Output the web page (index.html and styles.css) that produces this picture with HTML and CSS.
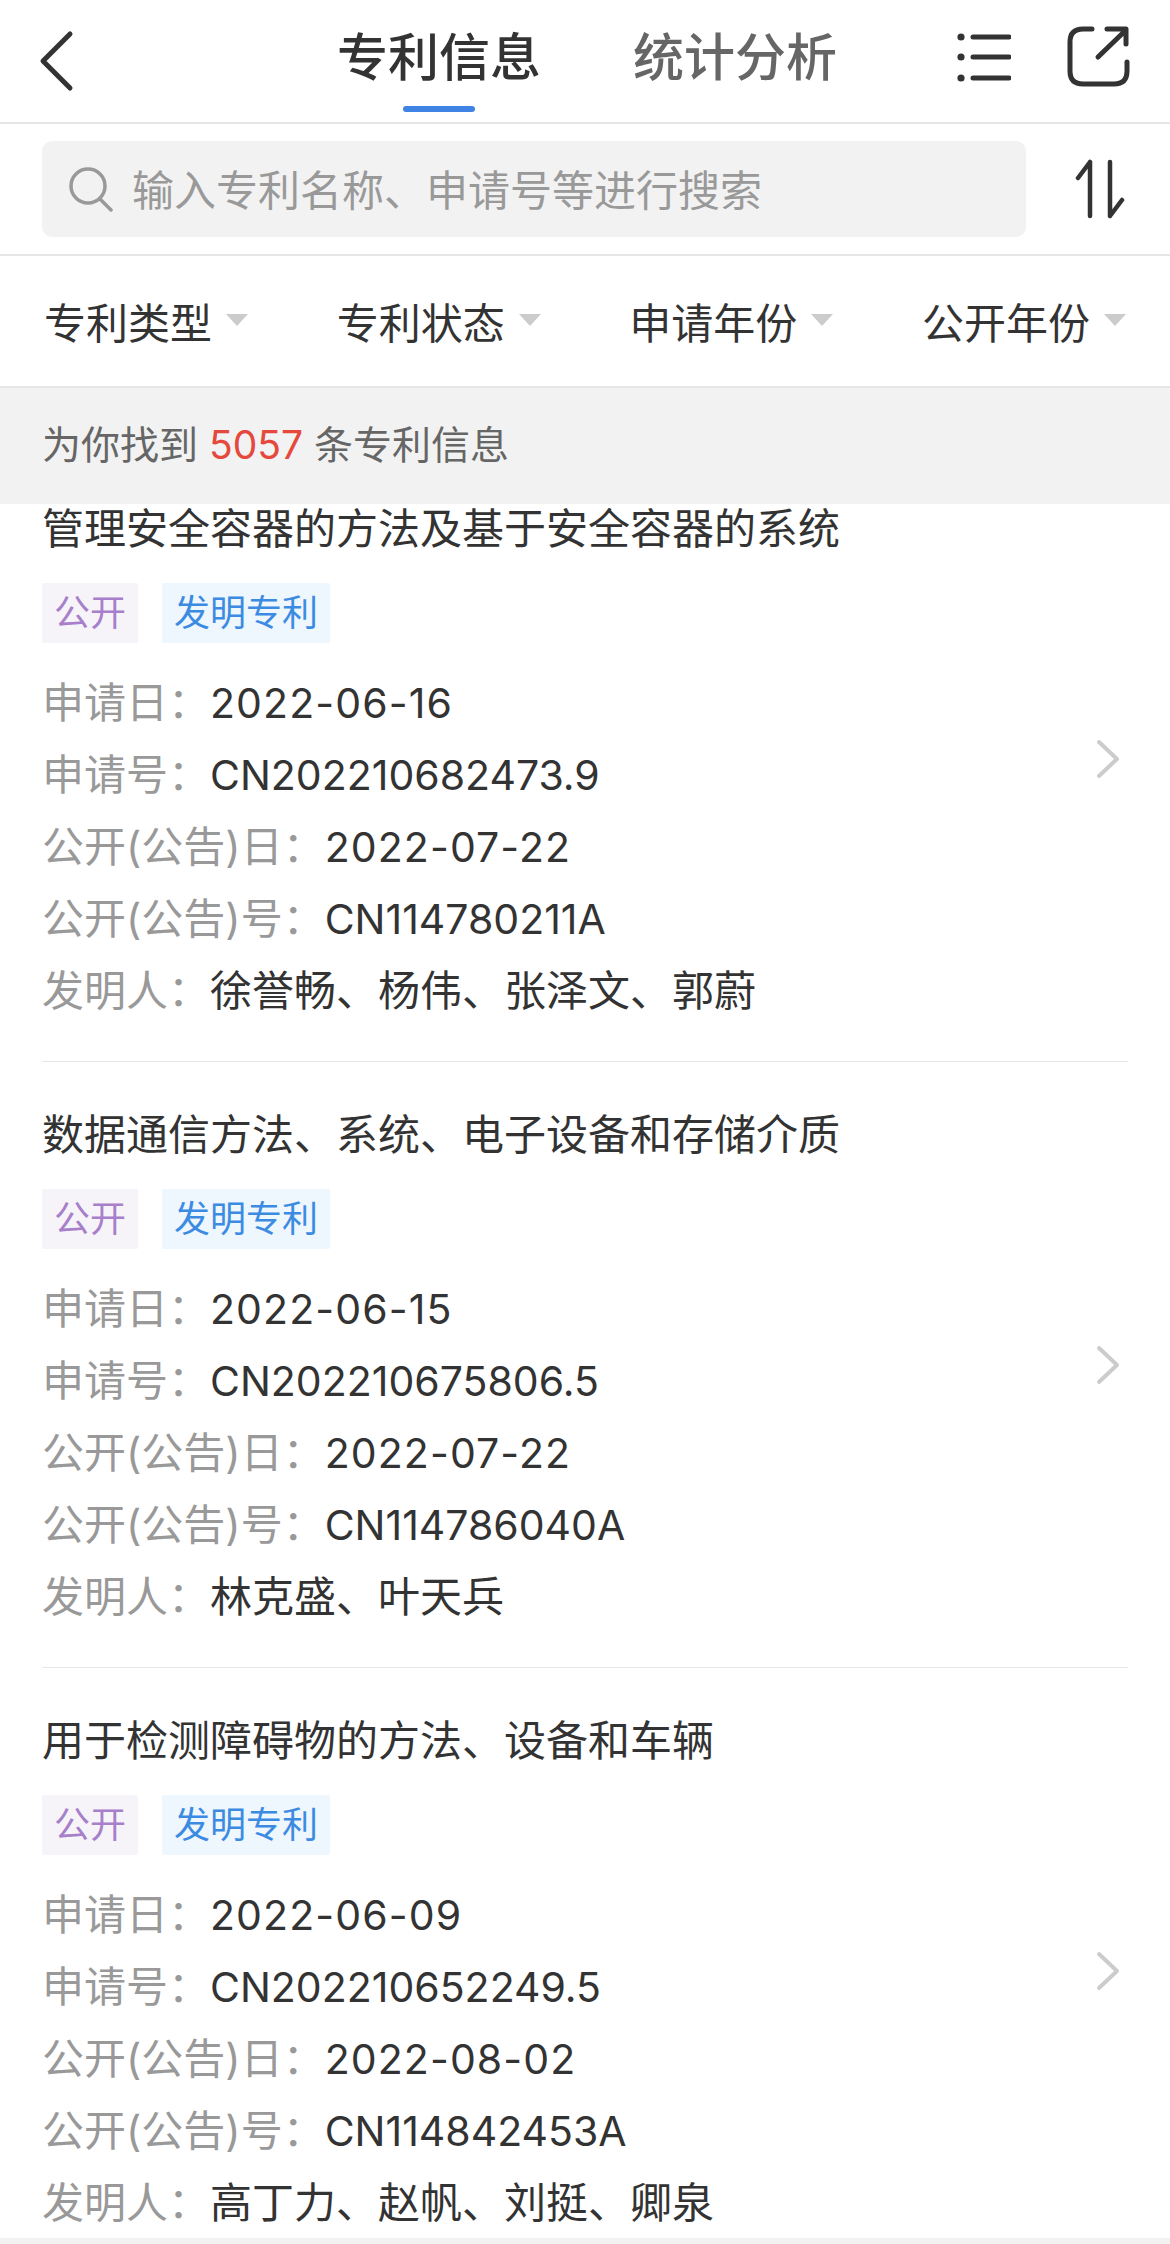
FILE: index.html
```html
<!DOCTYPE html>
<html lang="zh-CN">
<head>
  <meta charset="UTF-8" />
  <meta name="viewport" content="width=device-width, initial-scale=1.0"/>
  <title>专利信息</title>
  <link rel="stylesheet" href="styles.css">
</head>
<body>
  <div class="app">
    <div class="header">
      <svg class="back" width="36" height="64" viewBox="0 0 36 64"><path d="M32 5 L5 32 L32 59"/></svg>
      <nav class="tabs">
        <a class="tab active">专利信息</a>
        <a class="tab">统计分析</a>
      </nav>
      <div class="header-icons">
        <svg width="56" height="56" viewBox="0 0 56 56">
          <circle cx="6" cy="9" r="3.6" class="dot"/>
          <circle cx="6" cy="29" r="3.6" class="dot"/>
          <circle cx="6" cy="50" r="3.6" class="dot"/>
          <path d="M18 9 H54 M18 29 H54 M18 50 H54"/>
        </svg>
        <svg width="64" height="66" viewBox="0 0 64 66">
          <path d="M26 6 H17 Q4 6 4 19 V48 Q4 61 17 61 H48 Q61 61 61 48 V39"/>
          <path d="M32 34 L60 7 M41 6 H60 V21"/>
        </svg>
      </div>
    </div>

    <div class="search-row">
      <div class="search-box">
        <svg width="46" height="46" viewBox="0 0 46 46"><circle cx="20" cy="20" r="17"/><path d="M32 33 L43 44"/></svg>
        <span>输入专利名称、申请号等进行搜索</span>
      </div>
      <svg class="sort" width="50" height="60" viewBox="0 0 50 60"><path d="M15 3 V57 M15 3 L3 19 M35 57 V3 M35 57 L47 41"/></svg>
    </div>

    <div class="filters">
      <div class="filter">专利类型<i class="caret"></i></div>
      <div class="filter">专利状态<i class="caret"></i></div>
      <div class="filter">申请年份<i class="caret"></i></div>
      <div class="filter">公开年份<i class="caret"></i></div>
    </div>

    <div class="summary">为你找到 <b>5057</b> 条专利信息</div>

    <div class="list">
      <div class="item">
        <div class="item-body">
          <div class="title">管理安全容器的方法及基于安全容器的系统</div>
          <div class="tags"><span class="tag purple">公开</span><span class="tag blue">发明专利</span></div>
          <p class="row"><span class="label">申请日：</span><span class="num date">2022-06-16</span></p>
          <p class="row"><span class="label">申请号：</span><span class="num">CN202210682473.9</span></p>
          <p class="row"><span class="label">公开(公告)日：</span><span class="num date">2022-07-22</span></p>
          <p class="row"><span class="label">公开(公告)号：</span><span class="num">CN114780211A</span></p>
          <p class="row"><span class="label">发明人：</span>徐誉畅、杨伟、张泽文、郭蔚</p>
        </div>
        <svg class="arrow" width="26" height="40" viewBox="0 0 26 40"><path d="M3 3 L21 20 L3 37"/></svg>
      </div>
      <div class="item">
        <div class="item-body">
          <div class="title">数据通信方法、系统、电子设备和存储介质</div>
          <div class="tags"><span class="tag purple">公开</span><span class="tag blue">发明专利</span></div>
          <p class="row"><span class="label">申请日：</span><span class="num date">2022-06-15</span></p>
          <p class="row"><span class="label">申请号：</span><span class="num">CN202210675806.5</span></p>
          <p class="row"><span class="label">公开(公告)日：</span><span class="num date">2022-07-22</span></p>
          <p class="row"><span class="label">公开(公告)号：</span><span class="num">CN114786040A</span></p>
          <p class="row"><span class="label">发明人：</span>林克盛、叶天兵</p>
        </div>
        <svg class="arrow" width="26" height="40" viewBox="0 0 26 40"><path d="M3 3 L21 20 L3 37"/></svg>
      </div>
      <div class="item">
        <div class="item-body">
          <div class="title">用于检测障碍物的方法、设备和车辆</div>
          <div class="tags"><span class="tag purple">公开</span><span class="tag blue">发明专利</span></div>
          <p class="row"><span class="label">申请日：</span><span class="num date">2022-06-09</span></p>
          <p class="row"><span class="label">申请号：</span><span class="num">CN202210652249.5</span></p>
          <p class="row"><span class="label">公开(公告)日：</span><span class="num date">2022-08-02</span></p>
          <p class="row"><span class="label">公开(公告)号：</span><span class="num">CN114842453A</span></p>
          <p class="row"><span class="label">发明人：</span>高丁力、赵帆、刘挺、卿泉</p>
        </div>
        <svg class="arrow" width="26" height="40" viewBox="0 0 26 40"><path d="M3 3 L21 20 L3 37"/></svg>
      </div>
    </div>
    <div class="bottom-strip"></div>
  </div>
</body>
</html>
```

FILE: styles.css
```css
body { margin: 0; background: #fff; color: #333; font-family: "Inter", "Noto Sans CJK SC", sans-serif; }
svg { display: block; fill: none; stroke: #333; stroke-width: 5; stroke-linecap: round; stroke-linejoin: round; }
.app { display: flex; flex-direction: column; height: 2244px; overflow: hidden; }

.header {
  display: flex; align-items: center;
  height: 122px; padding: 0 40px 0 38px; border-bottom: 2px solid #e6e6e6;
}
.tabs { flex: 1; display: flex; gap: 92px; margin: 0 0 6px 263px; }
.tab { position: relative; font-size: 51px; line-height: 72px; font-weight: 500; color: #666; }
.tab.active { color: #333; }
.tab.active::after {
  content: ""; position: absolute; left: 66px; bottom: -18px;
  width: 72px; height: 6px; border-radius: 3px; background: #3f84e5;
}
.header-icons { display: flex; align-items: center; gap: 55px; margin-bottom: 10px; }
.dot { fill: #333; stroke: none; }

.search-row {
  display: flex; justify-content: space-between; align-items: center;
  height: 130px; padding: 0 42px 0 42px; border-bottom: 2px solid #e6e6e6;
}
.search-box {
  display: flex; align-items: center; gap: 18px;
  width: 984px; height: 96px; padding-left: 26px; box-sizing: border-box;
  background: #f2f2f2; border-radius: 10px;
  font-size: 42px; color: #999;
}
.search-box span { margin-bottom: 4px; }
.search-box svg { stroke: #999; stroke-width: 3.5; }
.sort { margin-right: 3px; stroke-width: 4.5; }

.filters {
  display: flex; justify-content: space-between; align-items: center;
  height: 128px; padding: 0 44px 2px; border-bottom: 2px solid #e6e6e6;
}
.filter { display: flex; align-items: center; gap: 14px; font-size: 42px; }
.caret {
  width: 0; height: 0;
  border-left: 11px solid transparent; border-right: 11px solid transparent; border-top: 12px solid #ccc;
}

.summary {
  height: 116px; line-height: 114px; padding-left: 42px;
  background: #f2f2f2; color: #666; font-size: 39px;
}
.summary b { font-weight: 400; color: #e5483c; }

.list { flex: 1; overflow: hidden; }
.item { display: flex; align-items: center; margin: 0 42px; border-bottom: 1px solid #e6e6e6; }
.item:first-child { margin-top: -48px; }
.item-body { flex: 1; padding: 47px 0 34px; }
.arrow { stroke: #ccc; stroke-width: 4; margin-right: 6px; }
.title { font-size: 42px; line-height: 52px; }
.tags { display: flex; gap: 24px; margin: 28px 0 24px; }
.tag { height: 60px; line-height: 60px; padding: 0 12px; font-size: 36px; border-radius: 2px; }
.purple { background: #f6f4f8; color: #a77fca; }
.blue { background: #eef6fe; color: #3c8be2; }
.row { margin: 0; font-size: 42px; line-height: 72px; white-space: nowrap; }
.label { color: #999; }
.num { font-size: 41px; }
.date { letter-spacing: 1.1px; }

.bottom-strip { height: 6px; background: #f2f2f2; }
```
